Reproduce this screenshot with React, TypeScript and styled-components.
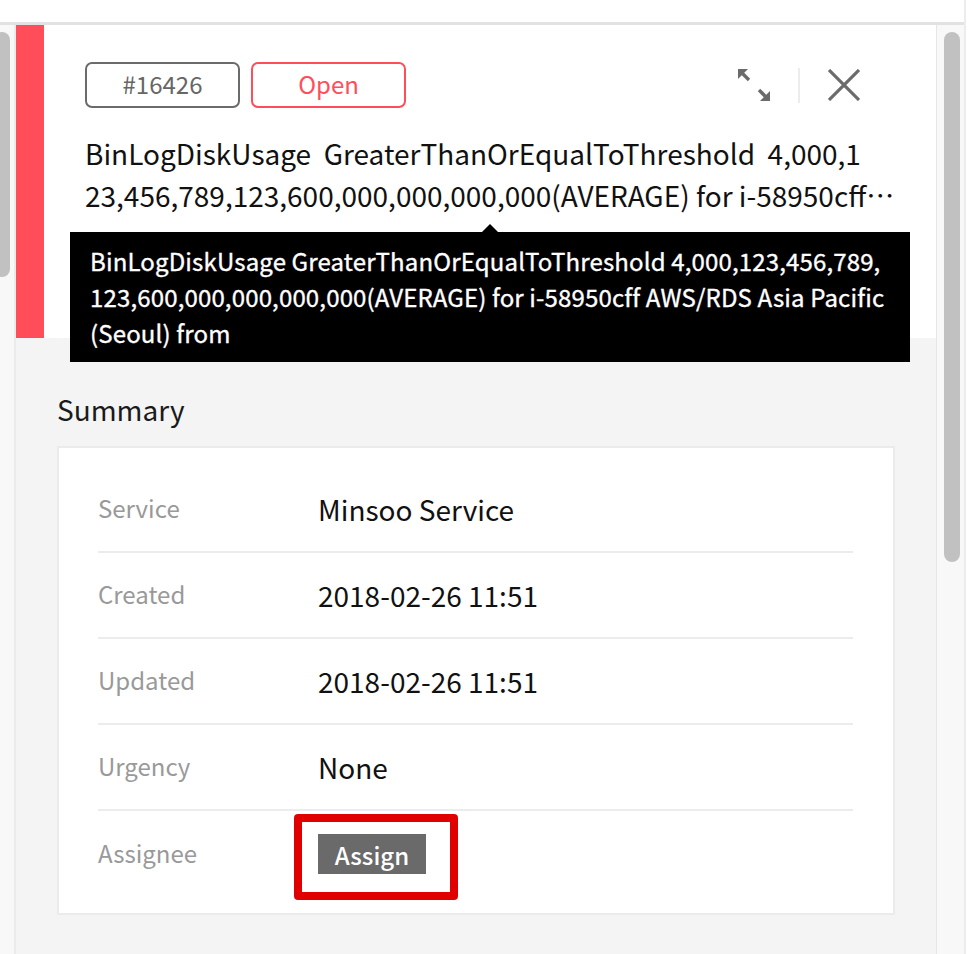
import * as React from "react"
import styled, { createGlobalStyle } from 'styled-components'

const GlobalStyle = createGlobalStyle`
  body {
    margin: 0;
    background: #fff;
    font-family: "Noto Sans CJK KR", "Noto Sans", sans-serif;
  }
`

const title = "BinLogDiskUsage  GreaterThanOrEqualToThreshold  4,000,1\n23,456,789,123,600,000,000,000,000(AVERAGE) for i-58950cff AWS/RDS Asia Pacific (Seoul) from"
const tip = "BinLogDiskUsage GreaterThanOrEqualToThreshold 4,000,123,456,789, 123,600,000,000,000,000(AVERAGE) for i-58950cff AWS/RDS Asia Pacific (Seoul) from"

const rows = [
  { label: 'Service', value: 'Minsoo Service' },
  { label: 'Created', value: '2018-02-26 11:51' },
  { label: 'Updated', value: '2018-02-26 11:51' },
  { label: 'Urgency', value: 'None' },
]

function ExpandIcon() {
  return (
    <svg width="32" height="32" viewBox="0 0 32 32">
      <polygon points="0,0 10,0 0,10" fill="#6b6b6b" />
      <line x1="3" y1="3" x2="11" y2="11" stroke="#6b6b6b" strokeWidth="3.4" />
      <polygon points="32,32 22,32 32,22" fill="#6b6b6b" />
      <line x1="29" y1="29" x2="21" y2="21" stroke="#6b6b6b" strokeWidth="3.4" />
    </svg>
  )
}

function CloseIcon() {
  return (
    <svg width="32" height="32" viewBox="0 0 32 32">
      <path d="M1 1 L31 31 M31 1 L1 31" stroke="#6b6b6b" strokeWidth="3.2" />
    </svg>
  )
}

export default function App() {
  return (
    <Frame>
      <GlobalStyle />
      <TopBar />
      <Body>
        <LeftGutter><Thumb $h={245} /></LeftGutter>
        <Main>
          <Header>
            <RedBar />
            <HeaderBody>
              <HeaderTop>
                <Badges>
                  <Badge>#16426</Badge>
                  <Badge $red>Open</Badge>
                </Badges>
                <Actions>
                  <IconButton><ExpandIcon /></IconButton>
                  <Divider />
                  <IconButton><CloseIcon /></IconButton>
                </Actions>
              </HeaderTop>
              <Title>{title}</Title>
            </HeaderBody>
          </Header>
          <Tooltip>{tip}</Tooltip>
          <Summary>
            <SectionTitle>Summary</SectionTitle>
            <Card>
              {rows.map(r => (
                <Row key={r.label}>
                  <Label>{r.label}</Label>
                  <Value>{r.value}</Value>
                </Row>
              ))}
              <Row $last>
                <Label>Assignee</Label>
                <Highlight>
                  <AssignButton>Assign</AssignButton>
                </Highlight>
              </Row>
            </Card>
          </Summary>
        </Main>
        <ScrollTrack><Thumb $h={530} /></ScrollTrack>
      </Body>
    </Frame>
  )
}

const Frame = styled.div`
  width: 966px;
  height: 954px;
  box-sizing: border-box;
  border-right: 2px solid #ececec;
  overflow: hidden;
`

const TopBar = styled.div`
  height: 22px;
  background: #fff;
  border-bottom: 3px solid #e2e2e2;
`

const Body = styled.div`
  display: flex;
  height: 929px;
`

const LeftGutter = styled.div`
  width: 14px;
  background: #f8f8f8;
  border-right: 2px solid #ebebeb;
  overflow: hidden;
  padding-top: 7px;

  & > div {
    margin-left: -6px;
  }
`

const Thumb = styled.div<{ $h: number }>`
  width: 16px;
  height: ${p => p.$h}px;
  border-radius: 8px;
  background: #c1c1c1;
`

const ScrollTrack = styled.div`
  width: 20px;
  background: #f8f8f8;
  border-left: 1px solid #e6e6e6;
  padding: 7px 0 0 7px;
`

const Main = styled.div`
  flex: 1;
  position: relative;
  background: #f4f4f4;
`

const Header = styled.div`
  display: flex;
  height: 313px;
  background: #fff;
`

const RedBar = styled.div`
  width: 28px;
  background: #ff4d5a;
`

const HeaderBody = styled.div`
  flex: 1;
  padding: 37px 36px 0 41px;
`

const HeaderTop = styled.div`
  display: flex;
  align-items: center;
  justify-content: space-between;
`

const Badges = styled.div`
  display: flex;
  gap: 11px;
`

const Badge = styled.div<{ $red?: boolean }>`
  width: 155px;
  height: 46px;
  box-sizing: border-box;
  padding-bottom: 3px;
  border: 2px solid ${p => (p.$red ? '#ff4d5a' : '#6b6b6b')};
  border-radius: 7px;
  color: ${p => (p.$red ? '#ff4d5a' : '#666')};
  font-size: 24px;
  display: flex;
  align-items: center;
  justify-content: center;
`

const Actions = styled.div`
  display: flex;
  align-items: center;
  margin-right: 40px;
  gap: 28px;
`

const IconButton = styled.div`
  width: 32px;
  height: 32px;
  display: flex;
`

const Divider = styled.div`
  width: 2px;
  height: 35px;
  background: #ececec;
`

const Title = styled.div`
  margin: 24px 0 0 0;
  font-size: 28px;
  line-height: 42px;
  color: #111;
  white-space: pre-wrap;
  word-break: break-all;
  display: -webkit-box;
  -webkit-line-clamp: 2;
  -webkit-box-orient: vertical;
  overflow: hidden;
`

const Tooltip = styled.div`
  position: absolute;
  left: 54px;
  top: 207px;
  width: 840px;
  height: 130px;
  box-sizing: border-box;
  padding: 11px 20px;
  background: #000;
  color: #fff;
  font-size: 24px;
  line-height: 36px;
  letter-spacing: 0.15px;
  -webkit-text-stroke: 0.35px #fff;

  &::before {
    content: '';
    position: absolute;
    left: 412px;
    top: -8px;
    border-left: 8px solid transparent;
    border-right: 8px solid transparent;
    border-bottom: 8px solid #000;
  }
`

const Summary = styled.div`
  padding: 53px 41px 0;
`

const SectionTitle = styled.div`
  font-size: 28px;
  line-height: 36px;
  color: #1a1a1a;
  margin-bottom: 19px;
`

const Card = styled.div`
  width: 838px;
  box-sizing: border-box;
  background: #fff;
  border: 2px solid #ebebeb;
  padding: 19px 40px 16px 39px;
`

const Row = styled.div<{ $last?: boolean }>`
  display: flex;
  align-items: center;
  height: ${p => (p.$last ? 86 : 84)}px;
  border-bottom: ${p => (p.$last ? 'none' : '2px solid #ececec')};
`

const Label = styled.div`
  width: 220px;
  font-size: 24px;
  color: #999;
  margin-top: -4px;
`

const Value = styled.div`
  font-size: 28px;
  color: #111;
`

const Highlight = styled.div`
  position: relative;
  display: flex;

  &::after {
    content: '';
    position: absolute;
    top: -20px;
    left: -24px;
    right: -32px;
    bottom: -26px;
    border: 8px solid #e10000;
    border-radius: 4px;
  }
`

const AssignButton = styled.div`
  width: 108px;
  height: 40px;
  background: #6a6a6a;
  color: #fff;
  font-size: 24px;
  font-weight: 500;
  display: flex;
  align-items: center;
  justify-content: center;
`
